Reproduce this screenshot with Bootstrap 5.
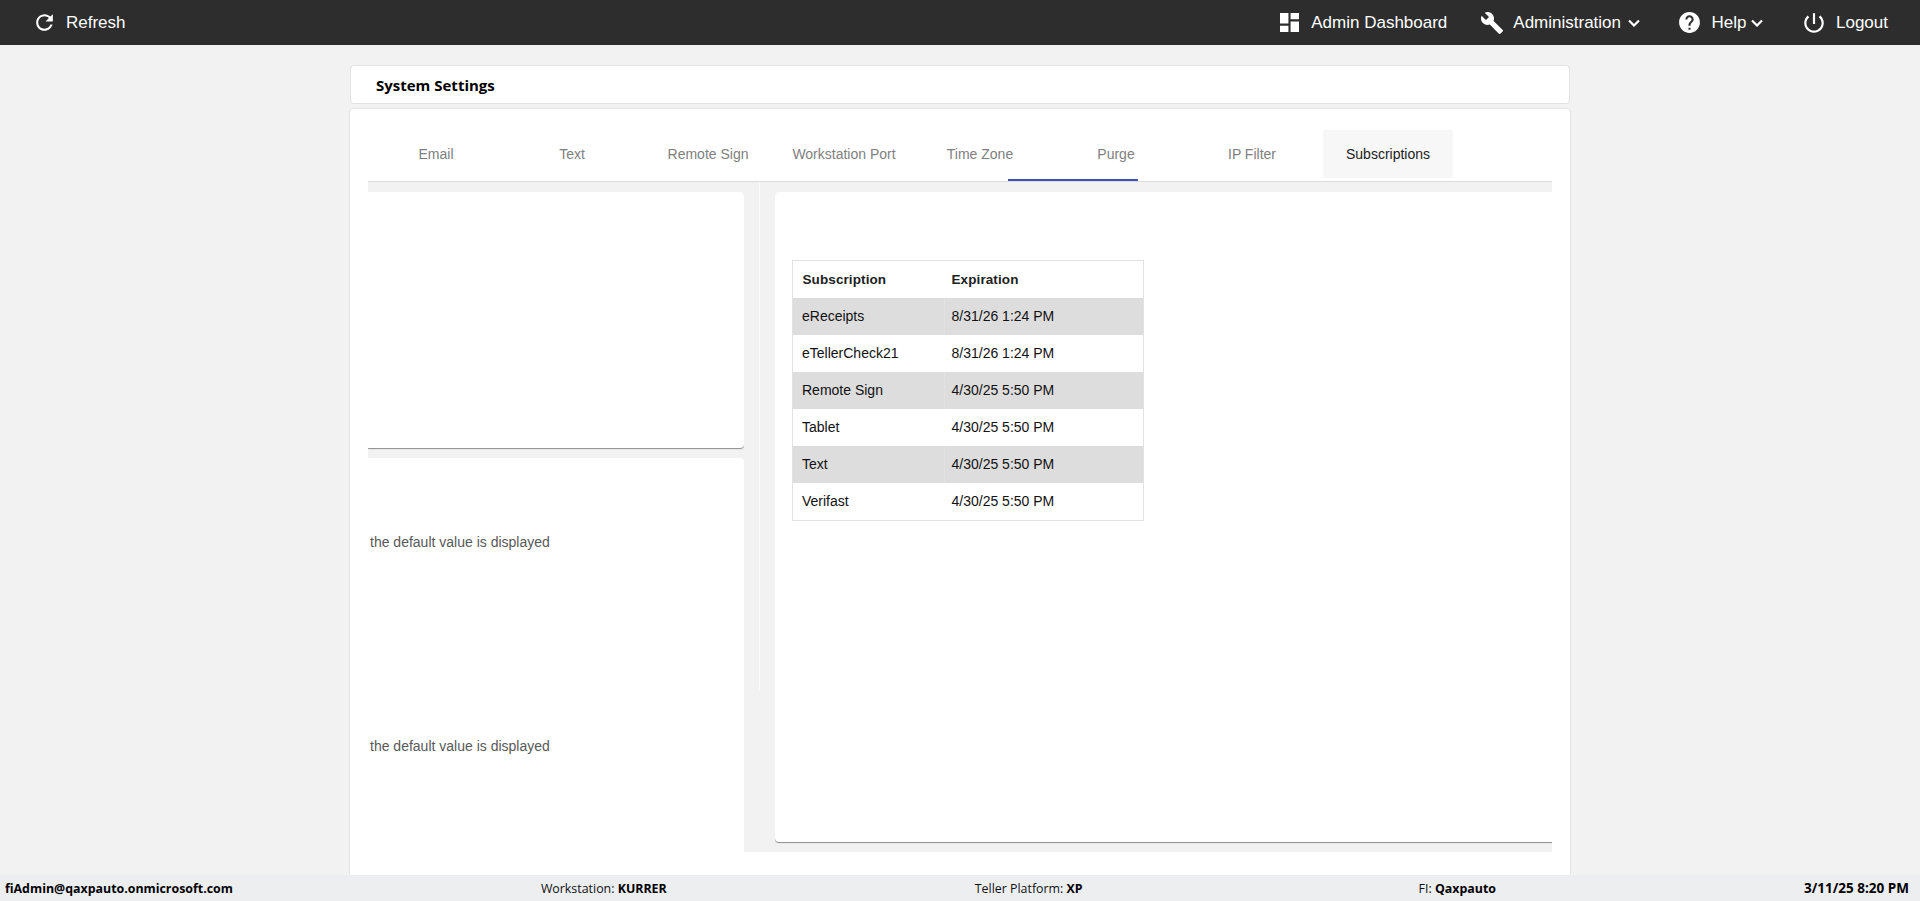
<!DOCTYPE html>
<html lang="en">
<head>
<meta charset="utf-8">
<title>System Settings</title>
<link href="https://cdn.jsdelivr.net/npm/bootstrap@5.3.0/dist/css/bootstrap.min.css" rel="stylesheet">
<style>
html,body{height:100%;}
body{background:#f2f2f2;font-family:"Liberation Sans",Arial,sans-serif;overflow:hidden;}
.app-shell{height:901px;}
.top-bar{height:45px;background:#2d2d2d;padding:0;flex:none;}
.top-link{color:#fff;font-size:17px;line-height:24px;padding:0;text-decoration:none;white-space:nowrap;}
.top-link:hover{color:#fff;}
.top-link svg{fill:#fff;flex:none;}
.ref-link{margin-left:32px;gap:9px;}
.right-links{margin-right:32px;}
.dash-link{gap:12px;}
.tool-link{margin-left:33px;gap:9px;}
.help-link{margin-left:36.5px;gap:10px;}
.power-link{margin-left:38px;gap:9px;}
.chev{fill:none!important;stroke:#fff;stroke-width:2.2;margin-left:-2px;}
.top-link .help-chev{margin-left:-5.5px;}
.page-body{flex:1 1 auto;min-height:0;}
.page-col{width:1220px;padding-top:20px;}
.title-box{height:39px;background:#fff;border:1px solid #e2e2e2;border-radius:4px;padding-left:25px;font:700 15px/38px "Open Sans",sans-serif;color:#000;margin-bottom:5px;}
.main-box{background:#fff;border-radius:4px 4px 0 0;box-shadow:0 0 2px rgba(0,0,0,.18);padding:21px 18px 0 18px;height:767px;}
.tab-strip{position:relative;height:52px;padding-left:3px;border-bottom:1px solid #dcdcdc;gap:6px;flex-wrap:nowrap;}
.tab-strip .nav-link{width:130px;height:48px;padding:0;text-align:center;font-size:14px;line-height:48px;color:#808080;white-space:nowrap;}
.tab-strip .nav-link.tab-on{background:#f7f7f7;color:#212121;}
.ink-bar{position:absolute;left:640px;bottom:0;width:130px;height:2px;background:#3f51b5;}
.split{height:670px;}
.left-pane{width:376px;flex:none;overflow:hidden;background:#f2f2f2;padding:10px 0 0 0;height:670px;}
.left-box{background:#fff;border-radius:0 4px 4px 0;}
.left-one{height:256px;box-shadow:0 1px 1px rgba(0,0,0,.42);margin-bottom:10px;}
.left-two{height:394px;border-radius:0 4px 0 0;padding:74px 0 0 2px;}
.hint-text{font-size:14px;line-height:21px;color:#595959;margin:0 0 183px 0;}
.gutter{width:31px;flex:none;background:#f2f2f2;height:670px;}
.gutter-line{width:1px;height:508px;background:#fafafa;margin:0 0 0 15px;}
.right-pane{flex:1 1 auto;overflow:hidden;background:#f2f2f2;height:670px;padding-top:10px;}
.right-box{height:650px;background:#fff;border-radius:4px 0 0 4px;box-shadow:0 1px 1px rgba(0,0,0,.42);margin-right:-6px;padding:68px 0 0 17px;}
.sub-table{width:352px;margin:0;border:1.5px solid #e2e2e2;font-size:14px;color:#111;table-layout:fixed;border-collapse:separate;border-spacing:0;}
.sub-table th,.sub-table td{height:37px;padding:0 0 0 9px;vertical-align:middle;border:0;background:#fff;box-shadow:none;color:#111;}
.sub-table th{font-size:13.5px;font-weight:700;padding-left:9.5px;padding-top:1px;letter-spacing:.1px;color:#212121;}
.sub-table .col-a{width:151px;}
.sub-table th.col-b,.sub-table td.col-b{padding-left:7.5px;}
.sub-table tbody tr:nth-child(odd) td{background:#ddd;}
.sub-table tbody tr:nth-child(odd) td.col-b{box-shadow:inset 1px 0 0 #e2e2e2;}
.status-bar{height:26px;flex:none;background:#eceef0;padding:0 11px 0 5px;font:400 12.4px/27px "Open Sans",sans-serif;color:#111;}
.status-bar b{font-weight:700;color:#000;}
.fi-cell{margin-left:28px;}
.stamp-cell{font-size:13.5px;}
</style>
</head>
<body>
<div class="app-shell d-flex flex-column">
  <nav class="navbar top-bar d-flex justify-content-between align-items-center flex-nowrap">
    <a class="top-link ref-link d-flex align-items-center" href="#">
      <svg width="25" height="25" viewBox="0 0 24 24"><path d="M17.65 6.35C16.2 4.9 14.21 4 12 4c-4.42 0-7.99 3.58-7.99 8s3.57 8 7.99 8c3.73 0 6.84-2.55 7.73-6h-2.08c-.82 2.33-3.04 4-5.65 4-3.31 0-6-2.69-6-6s2.69-6 6-6c1.66 0 3.14.69 4.22 1.78L13 11h7V4l-2.35 2.35z"/></svg>
      <span>Refresh</span>
    </a>
    <div class="right-links d-flex align-items-center">
      <a class="top-link dash-link d-flex align-items-center" href="#">
        <svg width="19" height="19" viewBox="3 3 18 18"><path d="M3 13h8V3H3v10zm0 8h8v-6H3v6zm10 0h8V11h-8v10zm0-18v6h8V3h-8z"/></svg>
        <span>Admin Dashboard</span>
      </a>
      <a class="top-link tool-link d-flex align-items-center" href="#">
        <svg width="24" height="24" viewBox="0 0 24 24"><path d="M22.7 19l-9.1-9.1c.9-2.3.4-5-1.5-6.9-2-2-5-2.4-7.4-1.3L9 6 6 9 1.6 4.7C.4 7.1.9 10.1 2.9 12.1c1.9 1.9 4.6 2.4 6.9 1.5l9.1 9.1c.4.4 1 .4 1.4 0l2.3-2.3c.5-.4.5-1.1.1-1.4z"/></svg>
        <span>Administration</span>
        <svg class="chev" width="12" height="8" viewBox="0 0 12 8"><path d="M1 1.5l5 5 5-5"/></svg>
      </a>
      <a class="top-link help-link d-flex align-items-center" href="#">
        <svg width="25" height="25" viewBox="0 0 24 24"><path d="M12 2C6.48 2 2 6.48 2 12s4.48 10 10 10 10-4.48 10-10S17.52 2 12 2zm1 17h-2v-2h2v2zm2.07-7.75l-.9.92C13.45 12.9 13 13.5 13 15h-2v-.5c0-1.1.45-2.1 1.17-2.83l1.24-1.26c.37-.36.59-.86.59-1.41 0-1.1-.9-2-2-2s-2 .9-2 2H8c0-2.21 1.79-4 4-4s4 1.79 4 4c0 .88-.36 1.68-.93 2.25z"/></svg>
        <span>Help</span>
        <svg class="chev help-chev" width="12" height="8" viewBox="0 0 12 8"><path d="M1 1.5l5 5 5-5"/></svg>
      </a>
      <a class="top-link power-link d-flex align-items-center" href="#">
        <svg width="26" height="26" viewBox="0 0 24 24"><path d="M13 3h-2v10h2V3zm4.83 2.17l-1.42 1.42C17.99 7.86 19 9.81 19 12c0 3.87-3.13 7-7 7s-7-3.13-7-7c0-2.19 1.01-4.14 2.58-5.42L6.17 5.17C4.23 6.82 3 9.26 3 12c0 4.97 4.03 9 9 9s9-4.03 9-9c0-2.74-1.23-5.18-3.17-6.83z"/></svg>
        <span>Logout</span>
      </a>
    </div>
  </nav>

  <main class="page-body d-flex justify-content-center overflow-hidden">
    <div class="page-col">
      <div class="title-box">System Settings</div>
      <div class="main-box">
        <ul class="nav tab-strip">
          <li class="nav-item"><a class="nav-link" href="#">Email</a></li>
          <li class="nav-item"><a class="nav-link" href="#">Text</a></li>
          <li class="nav-item"><a class="nav-link" href="#">Remote Sign</a></li>
          <li class="nav-item"><a class="nav-link" href="#">Workstation Port</a></li>
          <li class="nav-item"><a class="nav-link" href="#">Time Zone</a></li>
          <li class="nav-item"><a class="nav-link" href="#">Purge</a></li>
          <li class="nav-item"><a class="nav-link" href="#">IP Filter</a></li>
          <li class="nav-item"><a class="nav-link tab-on" href="#">Subscriptions</a></li>
          <li class="ink-bar"></li>
        </ul>
        <div class="split d-flex">
          <div class="left-pane">
            <div class="left-box left-one"></div>
            <div class="left-box left-two">
              <p class="hint-text">the default value is displayed</p>
              <p class="hint-text">the default value is displayed</p>
            </div>
          </div>
          <div class="gutter"><div class="gutter-line"></div></div>
          <div class="right-pane">
            <div class="right-box">
              <table class="table sub-table">
                <thead>
                  <tr><th class="col-a">Subscription</th><th class="col-b">Expiration</th></tr>
                </thead>
                <tbody>
                  <tr><td class="col-a">eReceipts</td><td class="col-b">8/31/26 1:24 PM</td></tr>
                  <tr><td class="col-a">eTellerCheck21</td><td class="col-b">8/31/26 1:24 PM</td></tr>
                  <tr><td class="col-a">Remote Sign</td><td class="col-b">4/30/25 5:50 PM</td></tr>
                  <tr><td class="col-a">Tablet</td><td class="col-b">4/30/25 5:50 PM</td></tr>
                  <tr><td class="col-a">Text</td><td class="col-b">4/30/25 5:50 PM</td></tr>
                  <tr><td class="col-a">Verifast</td><td class="col-b">4/30/25 5:50 PM</td></tr>
                </tbody>
              </table>
            </div>
          </div>
        </div>
      </div>
    </div>
  </main>

  <footer class="status-bar d-flex justify-content-between">
    <span><b>fiAdmin@qaxpauto.onmicrosoft.com</b></span>
    <span>Workstation: <b>KURRER</b></span>
    <span>Teller Platform: <b>XP</b></span>
    <span class="fi-cell">FI: <b>Qaxpauto</b></span>
    <span class="stamp-cell"><b>3/11/25 8:20 PM</b></span>
  </footer>
</div>
<script src="https://cdn.jsdelivr.net/npm/bootstrap@5.3.0/dist/js/bootstrap.bundle.min.js"></script>
</body>
</html>
